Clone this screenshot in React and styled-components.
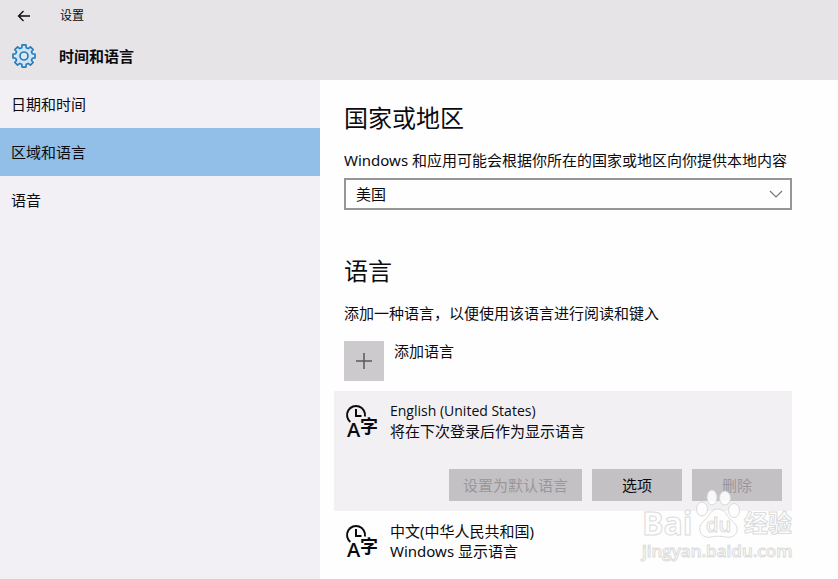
import React, { useState } from 'react'
import styled, { createGlobalStyle, css } from 'styled-components'

const theme = {
    header: '#e6e4e6',
    sidebar: '#f2f0f4',
    active: '#91bfe7',
    content: '#fefefe',
    card: '#f2f0f3',
    button: '#c3c1c4',
    tile: '#cccacd',
    border: '#979599',
    text: '#0b0b0f',
    disabled: '#99979b',
    accent: '#2c7cb8',
    outline: '#d8d8d8',
}

const menu = ['日期和时间', '区域和语言', '语音']

const languages = [
    { id: 'en', name: 'English (United States)', status: '将在下次登录后作为显示语言' },
    { id: 'zh', name: '中文(中华人民共和国)', status: 'Windows 显示语言' },
]

// eight rounded teeth around a ring
const gearPath = () => {
    const points = []
    for (let i = 0; i < 8; i++) {
        const steps = [[-15, 8.6], [-10, 11.2], [10, 11.2], [15, 8.6]]
        steps.forEach(([offset, r]) => {
            const a = ((i * 45 + offset) * Math.PI) / 180
            points.push(`${(12 + r * Math.sin(a)).toFixed(2)} ${(12 - r * Math.cos(a)).toFixed(2)}`)
        })
    }
    return `M${points.join('L')}Z`
}

const GearIcon = () => (
    <svg width="26" height="26" viewBox="-1 -1 26 26" fill="#cfe7f7" stroke={theme.accent} strokeWidth="1.7" strokeLinejoin="round" aria-hidden="true">
        <path d={gearPath()} />
        <circle cx="12" cy="12" r="4" fill="#dde8f0" />
    </svg>
)

const BackIcon = () => (
    <svg width="14" height="12" viewBox="0 0 14 12" fill="none" stroke={theme.text} strokeWidth="1.3" aria-hidden="true">
        <path d="M13 6H1.5M6.5 1L1.5 6L6.5 11" />
    </svg>
)

const ChevronIcon = () => (
    <svg width="14" height="8" viewBox="0 0 14 8" fill="none" stroke="#77757a" strokeWidth="1.2" aria-hidden="true">
        <path d="M1 1L7 7L13 1" />
    </svg>
)

const PlusIcon = () => (
    <svg width="16" height="16" viewBox="0 0 16 16" fill="none" stroke="#5b595d" strokeWidth="1.5" aria-hidden="true">
        <path d="M8 0V16M0 8H16" />
    </svg>
)

const LanguageIcon = () => (
    <svg width="34" height="40" viewBox="0 -3 34 40" overflow="visible" fill="none" stroke={theme.text} strokeWidth="2" aria-hidden="true">
        <path d="M4.3 17.9A9 9 0 1 1 18.9 12.5M10 5V12H15.5" />
        <g fill={theme.text} stroke="none">
            <text x="1" y="33" fontSize="20" fontWeight="600" fontFamily='"Open Sans", sans-serif'>A</text>
            <text x="14" y="29" fontSize="18" fontWeight="700" fontFamily='"Noto Sans CJK SC", sans-serif'>字</text>
        </g>
    </svg>
)

const PawIcon = () => (
    <svg width="46" height="50" viewBox="0 0 46 50" fill="#ffffff" stroke={theme.outline} strokeWidth="1" aria-hidden="true">
        <ellipse cx="7" cy="20" rx="5.5" ry="7" />
        <ellipse cx="17" cy="8.5" rx="5" ry="7.5" />
        <ellipse cx="30" cy="9" rx="5.5" ry="7" />
        <ellipse cx="39" cy="21.5" rx="5.5" ry="7" />
        <path d="M23 20C16 20 15 26 11 30C6 34 4 37 5 42C6 47 11 49 16 48C21 47 26 47 31 48C36 49 41 47 42 42C43 37 39 33 35 30C31 26 30 20 23 20Z" />
        <text x="11" y="43" fontSize="20" fontWeight="600" fontFamily='"Open Sans", sans-serif'>du</text>
    </svg>
)

const App = () => {
    const [active, setActive] = useState(menu[1])
    const [country, setCountry] = useState('美国')
    const [selected, setSelected] = useState('en')

    return (
        <Page>
            <GlobalStyle />
            <Header>
                <HeaderRow>
                    <BackButton aria-label="返回"><BackIcon /></BackButton>
                    <span>设置</span>
                </HeaderRow>
                <HeaderTitle>
                    <GearIcon />
                    <h1>时间和语言</h1>
                </HeaderTitle>
            </Header>

            <Body>
                <Sidebar>
                    {menu.map((item) => (
                        <MenuItem key={item} $active={item === active} onClick={() => setActive(item)}>
                            {item}
                        </MenuItem>
                    ))}
                </Sidebar>

                <Content>
                    <Section>
                        <h2>国家或地区</h2>
                        <label htmlFor="country">Windows 和应用可能会根据你所在的国家或地区向你提供本地内容</label>
                        <SelectBox>
                            <select id="country" value={country} onChange={(e) => setCountry(e.target.value)}>
                                <option>美国</option>
                            </select>
                            <ChevronIcon />
                        </SelectBox>
                    </Section>

                    <Section>
                        <h2>语言</h2>
                        <p>添加一种语言，以便使用该语言进行阅读和键入</p>
                        <AddButton>
                            <AddTile><PlusIcon /></AddTile>
                            <span>添加语言</span>
                        </AddButton>

                        <LanguageList>
                            {languages.map((lang) => (
                                <LanguageItem key={lang.id} $selected={lang.id === selected}>
                                    <LanguageButton onClick={() => setSelected(lang.id)}>
                                        <LanguageIcon />
                                        <LanguageText>
                                            <LanguageName $latin={lang.id === 'en'}>{lang.name}</LanguageName>
                                            <span>{lang.status}</span>
                                        </LanguageText>
                                    </LanguageButton>
                                    {lang.id === selected && (
                                        <Actions>
                                            <ActionButton disabled $wide>设置为默认语言</ActionButton>
                                            <ActionButton>选项</ActionButton>
                                            <ActionButton disabled>删除</ActionButton>
                                        </Actions>
                                    )}
                                </LanguageItem>
                            ))}
                        </LanguageList>
                    </Section>
                </Content>
            </Body>

            <Watermark>
                <WatermarkLogo>
                    <span>Bai</span>
                    <PawIcon />
                    <span>经验</span>
                </WatermarkLogo>
                <WatermarkUrl>jingyan.baidu.com</WatermarkUrl>
            </Watermark>
        </Page>
    )
}

const GlobalStyle = createGlobalStyle`
    * {
        box-sizing: border-box;
    }

    body {
        margin: 0;
        background-color: ${theme.content};
    }

    body, button, select {
        font-family: "Noto Sans", "Noto Sans CJK SC", sans-serif;
        font-size: 15px;
        line-height: 20px;
        color: ${theme.text};
    }

    button {
        border: 0;
        padding: 0;
        background: none;
        text-align: left;
    }

    h1, h2, p {
        margin: 0;
        font-weight: 400;
    }
`

const Page = styled.div`
    position: relative;
    display: flex;
    flex-direction: column;
    height: 100vh;
    overflow: hidden;
`

const Header = styled.header`
    background-color: ${theme.header};
`

const HeaderRow = styled.div`
    display: flex;
    align-items: center;
    gap: 12px;
    height: 32px;
    font-size: 12px;
`

const BackButton = styled.button`
    display: flex;
    align-items: center;
    justify-content: center;
    width: 48px;
    height: 32px;
`

const HeaderTitle = styled.div`
    display: flex;
    align-items: center;
    gap: 22px;
    height: 48px;
    padding-left: 11px;

    h1 {
        font-size: 15px;
        font-weight: 700;
    }
`

const Body = styled.div`
    display: flex;
    flex: 1;
    min-height: 0;
`

const Sidebar = styled.nav`
    width: 320px;
    flex-shrink: 0;
    background-color: ${theme.sidebar};
`

const MenuItem = styled.button`
    display: block;
    width: 100%;
    height: 48px;
    padding: 0 11px;
    background-color: ${(props) => (props.$active ? theme.active : 'transparent')};
`

const Content = styled.main`
    flex: 1;
    min-width: 0;
    padding: 22px 24px 0;
    background-color: ${theme.content};
    overflow: hidden;
`

const Section = styled.section`
    max-width: 448px;
    margin-bottom: 45px;

    h2 {
        font-size: 24px;
        line-height: 32px;
        margin-bottom: 16px;
    }

    label, p {
        display: block;
        white-space: nowrap;
    }
`

const SelectBox = styled.div`
    position: relative;
    margin-top: 8px;

    select {
        display: block;
        width: 100%;
        height: 32px;
        padding: 0 40px 0 10px;
        border: 2px solid ${theme.border};
        border-radius: 0;
        background-color: ${theme.content};
        appearance: none;
    }

    svg {
        position: absolute;
        top: 12px;
        right: 9px;
        pointer-events: none;
    }
`

const AddButton = styled.button`
    display: flex;
    gap: 10px;
    margin-top: 18px;
`

const AddTile = styled.span`
    display: flex;
    align-items: center;
    justify-content: center;
    width: 40px;
    height: 40px;
    background-color: ${theme.tile};
`

const LanguageList = styled.ul`
    list-style: none;
    margin: 10px 0 0 -10px;
    padding: 0;
`

const LanguageItem = styled.li`
    padding: 10px;
    background-color: ${(props) => (props.$selected ? theme.card : 'transparent')};
`

const LanguageButton = styled.button`
    display: flex;
    align-items: center;
    gap: 10px;
    width: 100%;
    padding-left: 2px;
`

const LanguageText = styled.span`
    display: flex;
    flex-direction: column;
`

const LanguageName = styled.span`
    ${(props) => props.$latin && css`
        font-family: "Open Sans", sans-serif;
        font-size: 14px;
    `}
`

const Actions = styled.div`
    display: flex;
    justify-content: flex-end;
    gap: 10px;
    margin-top: 28px;
`

const ActionButton = styled.button`
    width: ${(props) => (props.$wide ? '133px' : '90px')};
    height: 32px;
    text-align: center;
    background-color: ${theme.button};

    &:disabled {
        color: ${theme.disabled};
    }
`

const Watermark = styled.div`
    position: absolute;
    right: 46px;
    bottom: 16px;
    width: 150px;
    color: #ffffff;
    font-family: "Open Sans", "Noto Sans CJK SC", sans-serif;
    -webkit-text-stroke: 1px ${theme.outline};
    pointer-events: none;
    opacity: .9;
`

const WatermarkLogo = styled.div`
    display: flex;
    align-items: flex-end;
    justify-content: space-between;
    font-weight: 700;
    font-size: 32px;
    line-height: 32px;

    span:last-child {
        font-size: 24px;
    }
`

const WatermarkUrl = styled.div`
    font-size: 17px;
    font-weight: 600;
    line-height: 24px;
`

export default App
